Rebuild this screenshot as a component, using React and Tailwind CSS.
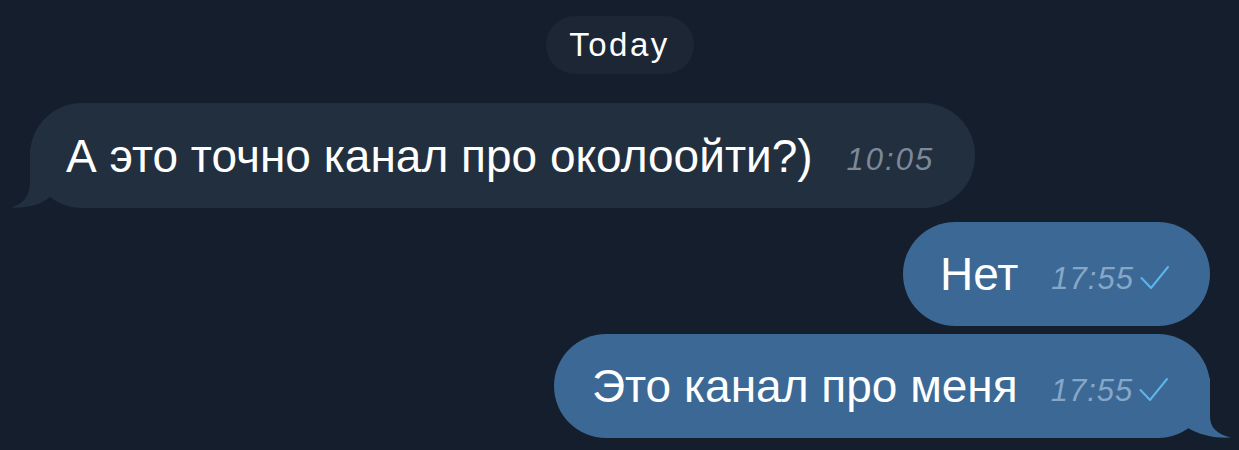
export default function App() {
  const font = { fontFamily: '"Liberation Sans", Arial, sans-serif' };
  const Check = () => (
    <svg width="30" height="26" viewBox="0 0 30 26" className="ml-[6px] translate-y-[4px]">
      <path d="M1.5 13 L11 23 L28 2" fill="none" stroke="#5fb4ec" strokeWidth="2" strokeLinecap="round" strokeLinejoin="round" />
    </svg>
  );
  return (
    <div className="w-[1239px] h-[450px] bg-[#151e2d] overflow-hidden flex flex-col" style={font}>
      <div className="flex justify-center mt-[16px]">
        <div className="h-[58px] w-[148px] rounded-full bg-[#1c2635] flex items-center justify-center text-white text-[33px] tracking-[2.5px]">Today</div>
      </div>
      <div className="mt-[29px] ml-[30px] relative self-start">
        <svg className="absolute left-[-22px] bottom-0" width="60" height="60" viewBox="0 0 60 60">
          <path d="M22 0 L22 32 C22 46, 18 55, 3 59.5 C 20 60.5, 34 56, 42 49 L52 0 Z" fill="#222f3f" />
        </svg>
        <div className="relative h-[105px] w-[945px] rounded-[52px] bg-[#222f3f] flex items-center pl-[36px]">
          <span className="text-white text-[46px] leading-none">А это точно канал про околоойти?)</span>
          <span className="ml-[34px] translate-y-[4px] text-[#7b8999] text-[31px] tracking-[2px] italic leading-none">10:05</span>
        </div>
      </div>
      <div className="mt-[14px] mr-[29px] self-end">
        <div className="h-[104px] w-[307px] rounded-[52px] bg-[#3b6894] flex items-center pl-[37px]">
          <span className="text-white text-[46px] leading-none">Нет</span>
          <span className="ml-[33px] translate-y-[4px] text-[#86a7c8] text-[31px] tracking-[1px] italic leading-none">17:55</span>
          <Check />
        </div>
      </div>
      <div className="mt-[8px] mr-[29px] self-end relative">
        <svg className="absolute right-[-22px] bottom-0" width="60" height="60" viewBox="0 0 60 60">
          <path d="M38 0 L38 38 C38 49, 44 56, 59 59.5 C 40 60.5, 26 56, 16 50 L8 0 Z" fill="#3b6894" />
        </svg>
        <div className="relative h-[104px] w-[656px] rounded-[52px] bg-[#3b6894] flex items-center pl-[38px]">
          <span className="text-white text-[46px] leading-none">Это канал про меня</span>
          <span className="ml-[33px] translate-y-[4px] text-[#86a7c8] text-[31px] tracking-[1px] italic leading-none">17:55</span>
          <Check />
        </div>
      </div>
    </div>
  );
}
